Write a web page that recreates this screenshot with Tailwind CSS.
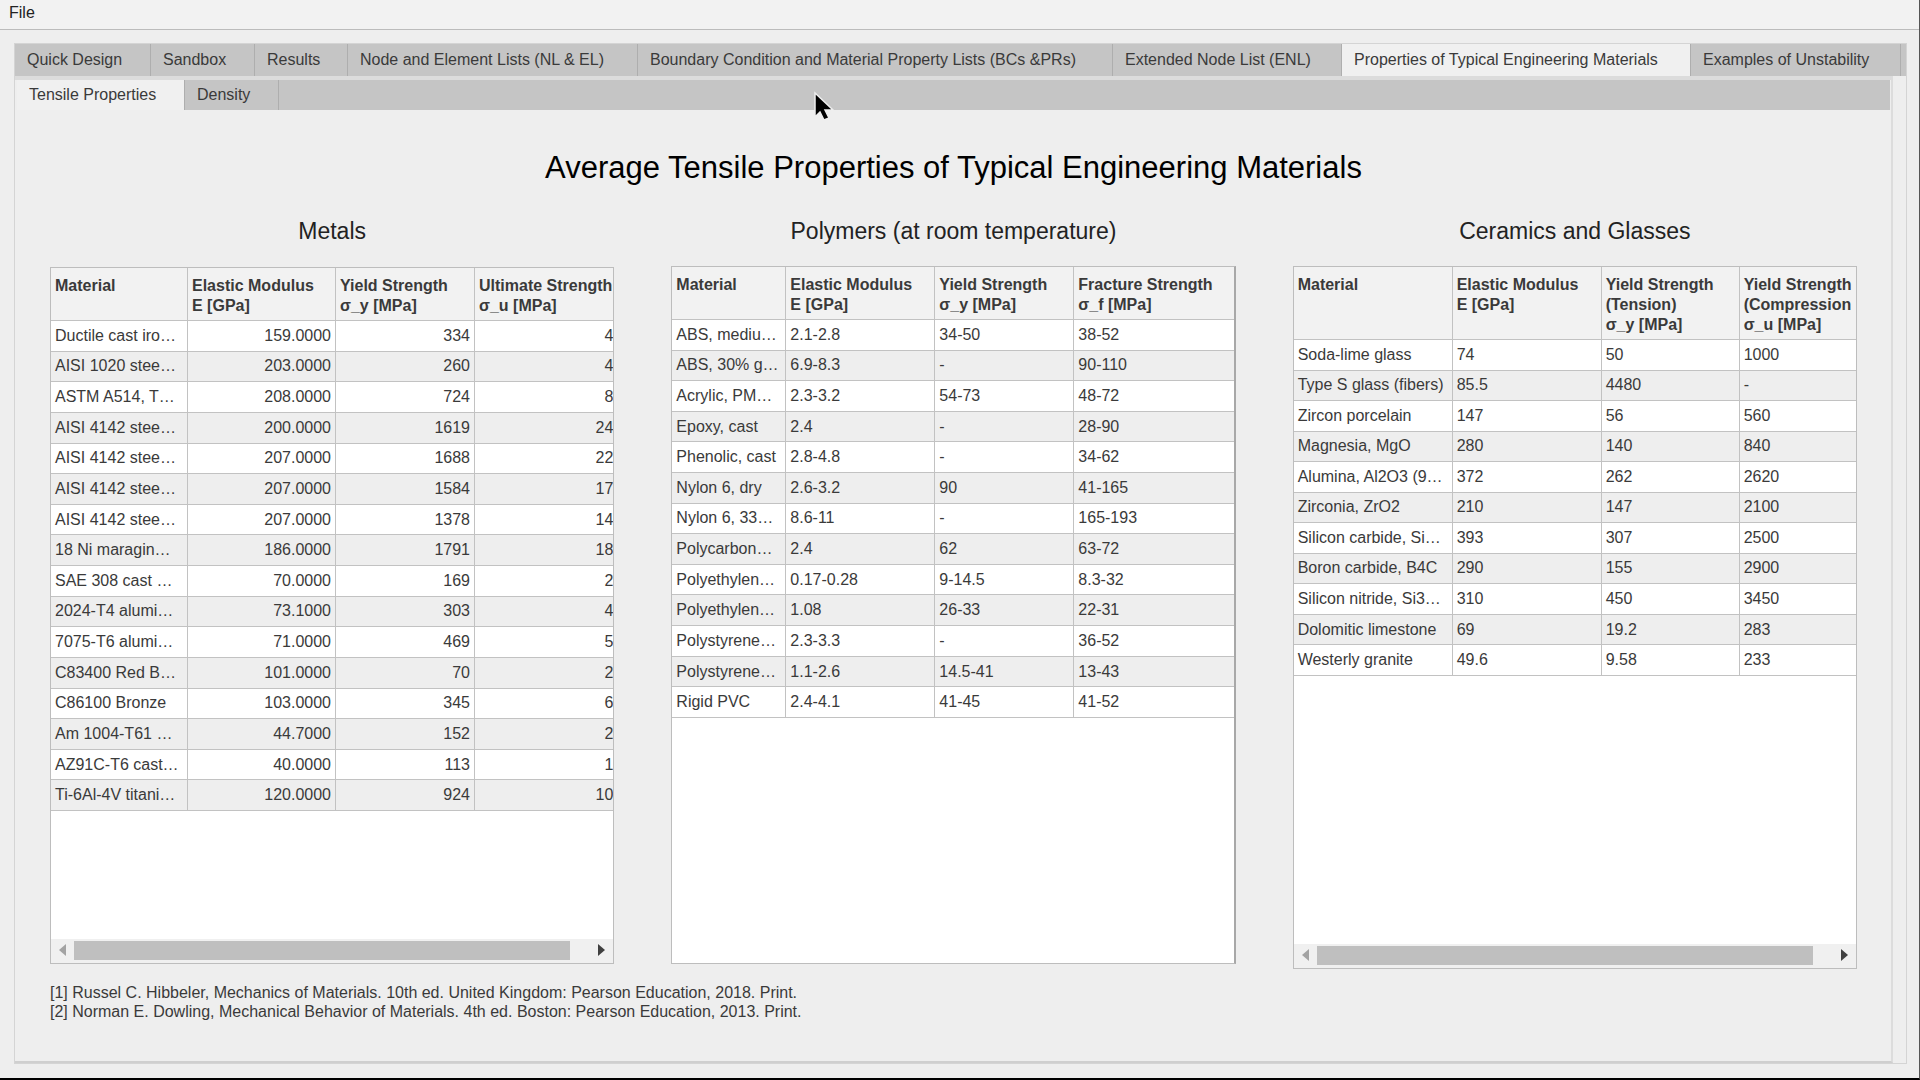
<!DOCTYPE html>
<html lang="en">
<head>
<meta charset="utf-8">
<title>Properties of Typical Engineering Materials</title>
<script src="https://cdn.jsdelivr.net/npm/@tailwindcss/browser@4"></script>
</head>
<body class="flex min-h-screen flex-col border-r border-b-2 border-r-[#555] border-b-black bg-[#eeeeee] font-['Liberation_Sans',Arial,sans-serif] text-[16px] leading-5 text-[#3a3a3a]">
<header class="flex h-[30px] items-center border-b border-[#bcbcbc] bg-[#f2f2f2] px-[9px] pb-[3px]"><button class="text-[#222]">File</button></header>

<main class="flex flex-1 flex-col pt-[13px] pr-3 pb-[14px] pl-[14px]">
<div class="flex flex-1 flex-col border border-[#d4d4d4]">
  <nav class="flex h-8 bg-[#c5c5c5] [&>button]:border-r [&>button]:border-[#aeaeae] [&>button]:pl-3 [&>button]:text-left [&>button]:whitespace-nowrap" aria-label="Sections">
    <button class="w-[136px]">Quick Design</button>
    <button class="w-[104px]">Sandbox</button>
    <button class="w-[93px]">Results</button>
    <button class="w-[290px]">Node and Element Lists (NL &amp; EL)</button>
    <button class="w-[475px]">Boundary Condition and Material Property Lists (BCs &amp;PRs)</button>
    <button class="w-[229px]">Extended Node List (ENL)</button>
    <button class="w-[349px] bg-[#f0f0f0]">Properties of Typical Engineering Materials</button>
    <button class="w-[210px]">Examples of Unstability</button>
  </nav>
  <div class="mr-[13px] flex flex-1 flex-col border-t-4 border-r-2 border-b-2 border-t-[#dcdcdc] border-r-[#dcdcdc] border-b-[#cfcfcf]">
    <nav class="mr-[1px] ml-[2px] flex h-[30px] bg-[#c5c5c5] [&>button]:border-r [&>button]:border-[#aeaeae] [&>button]:pl-3 [&>button]:text-left [&>button]:whitespace-nowrap" aria-label="Property tables">
      <button class="w-[168px] bg-[#f0f0f0]">Tensile Properties</button>
      <button class="w-[94px]">Density</button>
    </nav>

    <div class="flex flex-col pt-[38px] pr-[34px] pl-[35px]">
      <h1 class="text-center text-[31px] leading-10 text-black">Average Tensile Properties of Typical Engineering Materials</h1>
      <div class="grid grid-cols-3 gap-[57px] pt-[28px] [&_h2]:mb-[20px] [&_h2]:text-center [&_h2]:text-[23px] [&_h2]:leading-[30px] [&_h2]:text-[#222] [&_table]:w-full [&_table]:table-fixed [&_table]:border-separate [&_table]:border-spacing-0 [&_td]:overflow-hidden [&_td]:border-r [&_td]:border-b [&_td]:border-[#c2c2c2] [&_td]:px-1 [&_td]:whitespace-nowrap [&_td:last-child]:border-r-0 [&_th]:overflow-hidden [&_th]:border-r [&_th]:border-b [&_th]:border-[#c2c2c2] [&_th]:bg-[#f2f2f2] [&_th]:px-1 [&_th]:pt-2 [&_th]:pb-1 [&_th]:text-left [&_th]:align-top [&_th]:font-bold [&_th]:whitespace-nowrap [&_th:last-child]:border-r-0 [&_tbody_tr:nth-child(even)]:bg-[#eeeeee]">

        <section>
          <h2>Metals</h2>
          <div class="mt-[21px] flex min-h-[697px] flex-col border border-[#bdbdbd] bg-white">
            <table class="h-[543px] [&_td]:text-right [&_td:first-child]:text-left [&_td:last-child]:pr-0">
              <colgroup><col class="w-[137px]"><col class="w-[148px]"><col class="w-[139px]"><col></colgroup>
              <thead><tr class="h-[53px]"><th>Material</th><th>Elastic Modulus<br>E [GPa]</th><th>Yield Strength<br>σ_y [MPa]</th><th>Ultimate Strength<br>σ_u [MPa]</th></tr></thead>
              <tbody>
                <tr><td>Ductile cast iro…</td><td>159.0000</td><td>334</td><td>4</td></tr>
                <tr><td>AISI 1020 stee…</td><td>203.0000</td><td>260</td><td>4</td></tr>
                <tr><td>ASTM A514, T…</td><td>208.0000</td><td>724</td><td>8</td></tr>
                <tr><td>AISI 4142 stee…</td><td>200.0000</td><td>1619</td><td>24</td></tr>
                <tr><td>AISI 4142 stee…</td><td>207.0000</td><td>1688</td><td>22</td></tr>
                <tr><td>AISI 4142 stee…</td><td>207.0000</td><td>1584</td><td>17</td></tr>
                <tr><td>AISI 4142 stee…</td><td>207.0000</td><td>1378</td><td>14</td></tr>
                <tr><td>18 Ni maragin…</td><td>186.0000</td><td>1791</td><td>18</td></tr>
                <tr><td>SAE 308 cast …</td><td>70.0000</td><td>169</td><td>2</td></tr>
                <tr><td>2024-T4 alumi…</td><td>73.1000</td><td>303</td><td>4</td></tr>
                <tr><td>7075-T6 alumi…</td><td>71.0000</td><td>469</td><td>5</td></tr>
                <tr><td>C83400 Red B…</td><td>101.0000</td><td>70</td><td>2</td></tr>
                <tr><td>C86100 Bronze</td><td>103.0000</td><td>345</td><td>6</td></tr>
                <tr><td>Am 1004-T61 …</td><td>44.7000</td><td>152</td><td>2</td></tr>
                <tr><td>AZ91C-T6 cast…</td><td>40.0000</td><td>113</td><td>1</td></tr>
                <tr><td>Ti-6Al-4V titani…</td><td>120.0000</td><td>924</td><td>10</td></tr>
              </tbody>
            </table>
            <div class="mt-auto flex h-6 items-center bg-[#f0f0f0] px-2 pb-0.5">
              <svg class="h-3 w-[7px] fill-[#a3a3a3]" viewBox="0 0 7 12"><path d="M7 0v12L0 6z"/></svg>
              <div class="ml-2 flex-1 pr-7"><div class="h-[19px] bg-[#bfbfbf]"></div></div>
              <svg class="h-3 w-[7px] fill-[#404040]" viewBox="0 0 7 12"><path d="M0 0v12l7-6z"/></svg>
            </div>
          </div>
        </section>

        <section>
          <h2>Polymers (at room temperature)</h2>
          <div class="min-h-[698px] border border-r-2 border-[#bdbdbd] border-r-[#a8a8a8] bg-white">
            <table class="h-[451px]">
              <colgroup><col class="w-[114px]"><col class="w-[149px]"><col class="w-[139px]"><col></colgroup>
              <thead><tr class="h-[53px]"><th>Material</th><th>Elastic Modulus<br>E [GPa]</th><th>Yield Strength<br>σ_y [MPa]</th><th>Fracture Strength<br>σ_f [MPa]</th></tr></thead>
              <tbody>
                <tr><td>ABS, mediu…</td><td>2.1-2.8</td><td>34-50</td><td>38-52</td></tr>
                <tr><td>ABS, 30% g…</td><td>6.9-8.3</td><td>-</td><td>90-110</td></tr>
                <tr><td>Acrylic, PM…</td><td>2.3-3.2</td><td>54-73</td><td>48-72</td></tr>
                <tr><td>Epoxy, cast</td><td>2.4</td><td>-</td><td>28-90</td></tr>
                <tr><td>Phenolic, cast</td><td>2.8-4.8</td><td>-</td><td>34-62</td></tr>
                <tr><td>Nylon 6, dry</td><td>2.6-3.2</td><td>90</td><td>41-165</td></tr>
                <tr><td>Nylon 6, 33…</td><td>8.6-11</td><td>-</td><td>165-193</td></tr>
                <tr><td>Polycarbon…</td><td>2.4</td><td>62</td><td>63-72</td></tr>
                <tr><td>Polyethylen…</td><td>0.17-0.28</td><td>9-14.5</td><td>8.3-32</td></tr>
                <tr><td>Polyethylen…</td><td>1.08</td><td>26-33</td><td>22-31</td></tr>
                <tr><td>Polystyrene…</td><td>2.3-3.3</td><td>-</td><td>36-52</td></tr>
                <tr><td>Polystyrene…</td><td>1.1-2.6</td><td>14.5-41</td><td>13-43</td></tr>
                <tr><td>Rigid PVC</td><td>2.4-4.1</td><td>41-45</td><td>41-52</td></tr>
              </tbody>
            </table>
          </div>
        </section>

        <section>
          <h2>Ceramics and Glasses</h2>
          <div class="flex min-h-[703px] flex-col border border-[#bdbdbd] bg-white">
            <table class="h-[409px]">
              <colgroup><col class="w-[159px]"><col class="w-[149px]"><col class="w-[138px]"><col></colgroup>
              <thead><tr class="h-[73px]"><th>Material</th><th>Elastic Modulus<br>E [GPa]</th><th>Yield Strength<br>(Tension)<br>σ_y [MPa]</th><th>Yield Strength<br>(Compression<br>σ_u [MPa]</th></tr></thead>
              <tbody>
                <tr><td>Soda-lime glass</td><td>74</td><td>50</td><td>1000</td></tr>
                <tr><td>Type S glass (fibers)</td><td>85.5</td><td>4480</td><td>-</td></tr>
                <tr><td>Zircon porcelain</td><td>147</td><td>56</td><td>560</td></tr>
                <tr><td>Magnesia, MgO</td><td>280</td><td>140</td><td>840</td></tr>
                <tr><td>Alumina, Al2O3 (9…</td><td>372</td><td>262</td><td>2620</td></tr>
                <tr><td>Zirconia, ZrO2</td><td>210</td><td>147</td><td>2100</td></tr>
                <tr><td>Silicon carbide, Si…</td><td>393</td><td>307</td><td>2500</td></tr>
                <tr><td>Boron carbide, B4C</td><td>290</td><td>155</td><td>2900</td></tr>
                <tr><td>Silicon nitride, Si3…</td><td>310</td><td>450</td><td>3450</td></tr>
                <tr><td>Dolomitic limestone</td><td>69</td><td>19.2</td><td>283</td></tr>
                <tr><td>Westerly granite</td><td>49.6</td><td>9.58</td><td>233</td></tr>
              </tbody>
            </table>
            <div class="mt-auto flex h-6 items-center bg-[#f0f0f0] px-2 pb-0.5">
              <svg class="h-3 w-[7px] fill-[#a3a3a3]" viewBox="0 0 7 12"><path d="M7 0v12L0 6z"/></svg>
              <div class="ml-2 flex-1 pr-7"><div class="h-[19px] bg-[#bfbfbf]"></div></div>
              <svg class="h-3 w-[7px] fill-[#404040]" viewBox="0 0 7 12"><path d="M0 0v12l7-6z"/></svg>
            </div>
          </div>
        </section>
      </div>
      <footer class="mt-[14px] leading-[19px]">
        <p>[1] Russel C. Hibbeler, Mechanics of Materials. 10th ed. United Kingdom: Pearson Education, 2018. Print.</p>
        <p>[2] Norman E. Dowling, Mechanical Behavior of Materials. 4th ed. Boston: Pearson Education, 2013. Print.</p>
      </footer>
    </div>
  </div>
</div>
</main>

<!-- mouse pointer -->
<svg class="pointer-events-none absolute top-[91px] left-[813px] h-[32px] w-[22px]" viewBox="0 0 22 32"><path d="M2 2v24l5-5 4 8 5-2-4-8h8z" fill="#000" stroke="#eee" stroke-width="1.5"/></svg>
</body>
</html>
